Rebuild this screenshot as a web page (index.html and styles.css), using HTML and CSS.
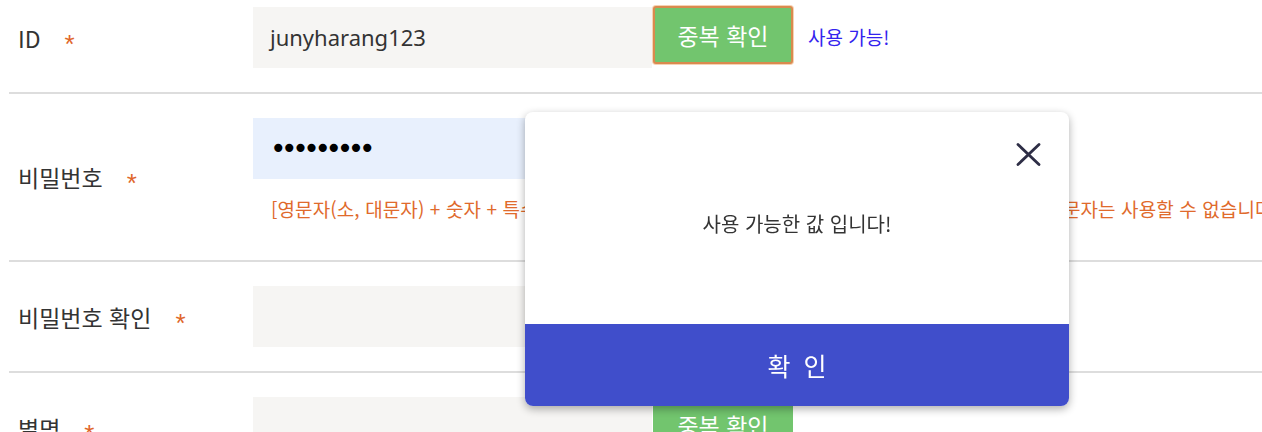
FILE: index.html
```html
<!DOCTYPE html>
<html lang="ko">
<head>
<meta charset="utf-8">
<title>회원가입</title>
<link rel="stylesheet" href="styles.css">
</head>
<body>
<form class="join-form">
  <div class="row row-first">
    <div class="label"><span class="label-text">ID</span><span class="req">*</span></div>
    <div class="control">
      <div class="control-line">
        <div class="field">junyharang123</div>
        <button type="button" class="btn-check is-focused">중복 확인</button>
        <span class="ok-msg">사용 가능!</span>
      </div>
    </div>
  </div>
  <div class="row">
    <div class="label"><span class="label-text">비밀번호</span><span class="req">*</span></div>
    <div class="control">
      <div class="field field-autofill"><span class="dots">•••••••••</span></div>
      <p class="hint">[영문자(소, 대문자) + 숫자 + 특수문자] 조합으로 8~16자리 반드시 입력해 주세요. 공백 및 일부 특수문자는 사용할 수 없습니다.</p>
    </div>
  </div>
  <div class="row">
    <div class="label"><span class="label-text">비밀번호 확인</span><span class="req">*</span></div>
    <div class="control">
      <div class="field"></div>
    </div>
  </div>
  <div class="row">
    <div class="label"><span class="label-text">별명</span><span class="req">*</span></div>
    <div class="control">
      <div class="control-line">
        <div class="field"></div>
        <button type="button" class="btn-check">중복 확인</button>
      </div>
    </div>
  </div>
</form>

<div class="modal" role="dialog">
  <div class="modal-head">
    <button type="button" class="modal-close" aria-label="닫기">
      <svg width="25" height="23" viewBox="0 0 25 23"><path d="M2 1.5 L23 21.5 M23 1.5 L2 21.5" stroke="#2e2e46" stroke-width="2.8" stroke-linecap="round" fill="none"/></svg>
    </button>
  </div>
  <div class="modal-body">
    <p class="modal-msg">사용 가능한 값 입니다!</p>
  </div>
  <button type="button" class="modal-ok">확 인</button>
</div>
</body>
</html>
```
FILE: styles.css
```css
html, body {
  margin: 0;
  padding: 0;
  overflow: hidden;
  background: #fff;
}
body {
  width: 1262px;
  height: 432px;
  font-family: "Noto Sans", "Noto Sans CJK KR", sans-serif;
  color: #333;
}
.join-form {
  margin: 0 0 0 9px;
}
.row {
  display: flex;
  align-items: center;
  padding: 24px 0;
  border-bottom: 2px solid #dddddd;
}
.row-first {
  padding-top: 7px;
}
.label {
  width: 244px;
  flex: none;
  box-sizing: border-box;
  padding-left: 9px;
  display: flex;
  align-items: center;
  font-family: "Noto Sans CJK KR", sans-serif;
  font-size: 23px;
  line-height: 30px;
  color: #333;
}
.req {
  margin-left: 24px;
  color: #e0662a;
  font-family: "Liberation Sans", sans-serif;
  font-size: 26px;
  line-height: 30px;
  transform: translateY(6px);
}
.control {
  flex: 1;
  min-width: 0;
}
.control-line {
  display: flex;
  align-items: flex-start;
}
.field {
  width: 399px;
  height: 61px;
  flex: none;
  box-sizing: border-box;
  padding-left: 17px;
  background: #f6f5f3;
  font-size: 22px;
  line-height: 61px;
  color: #333;
}
.field-autofill {
  background: #e8f0fd;
}
.dots {
  font-family: "DejaVu Sans", sans-serif;
  font-size: 28px;
  letter-spacing: -5.4px;
  color: #000;
}
.btn-check {
  width: 140px;
  height: 58px;
  margin: -1px 0 0 1px;
  border: 2px solid #72c56e;
  border-radius: 3px;
  background: #72c56e;
  color: #fff;
  font-family: "Noto Sans CJK KR", sans-serif;
  font-size: 23px;
  padding: 0;
}
.btn-check.is-focused {
  border-color: #d98a4e;
  box-shadow: 0 0 0 1px #f6d2b4;
}
.ok-msg {
  margin: 17px 0 0 15px;
  font-family: "Noto Sans CJK KR", sans-serif;
  font-size: 19px;
  line-height: 26px;
  color: #3322ee;
}
.hint {
  margin: 17px 0 14px;
  padding-left: 18px;
  white-space: nowrap;
  font-family: "Noto Sans CJK KR", sans-serif;
  font-size: 19px;
  line-height: 26px;
  letter-spacing: 0.1px;
  color: #e06a2c;
}

.modal {
  position: fixed;
  left: 525px;
  top: 112px;
  width: 544px;
  height: 294px;
  display: flex;
  flex-direction: column;
  background: #fff;
  border-radius: 8px;
  box-shadow: 0 3px 9px rgba(0, 0, 0, 0.32);
  overflow: hidden;
}
.modal-head {
  display: flex;
  justify-content: flex-end;
  padding: 31px 28px 0 0;
}
.modal-close {
  width: 25px;
  height: 23px;
  padding: 0;
  border: 0;
  background: none;
  display: block;
}
.modal-close svg {
  display: block;
}
.modal-body {
  flex: 1;
}
.modal-msg {
  margin: 45px 0 0;
  text-align: center;
  font-family: "Noto Sans CJK KR", sans-serif;
  font-size: 20px;
  line-height: 26px;
  color: #333;
}
.modal-ok {
  height: 82px;
  border: 0;
  padding: 0;
  background: #404ecb;
  color: #fff;
  font-family: "Noto Sans CJK KR", sans-serif;
  font-size: 25px;
  letter-spacing: 3px;
  text-indent: 3px;
}
```
